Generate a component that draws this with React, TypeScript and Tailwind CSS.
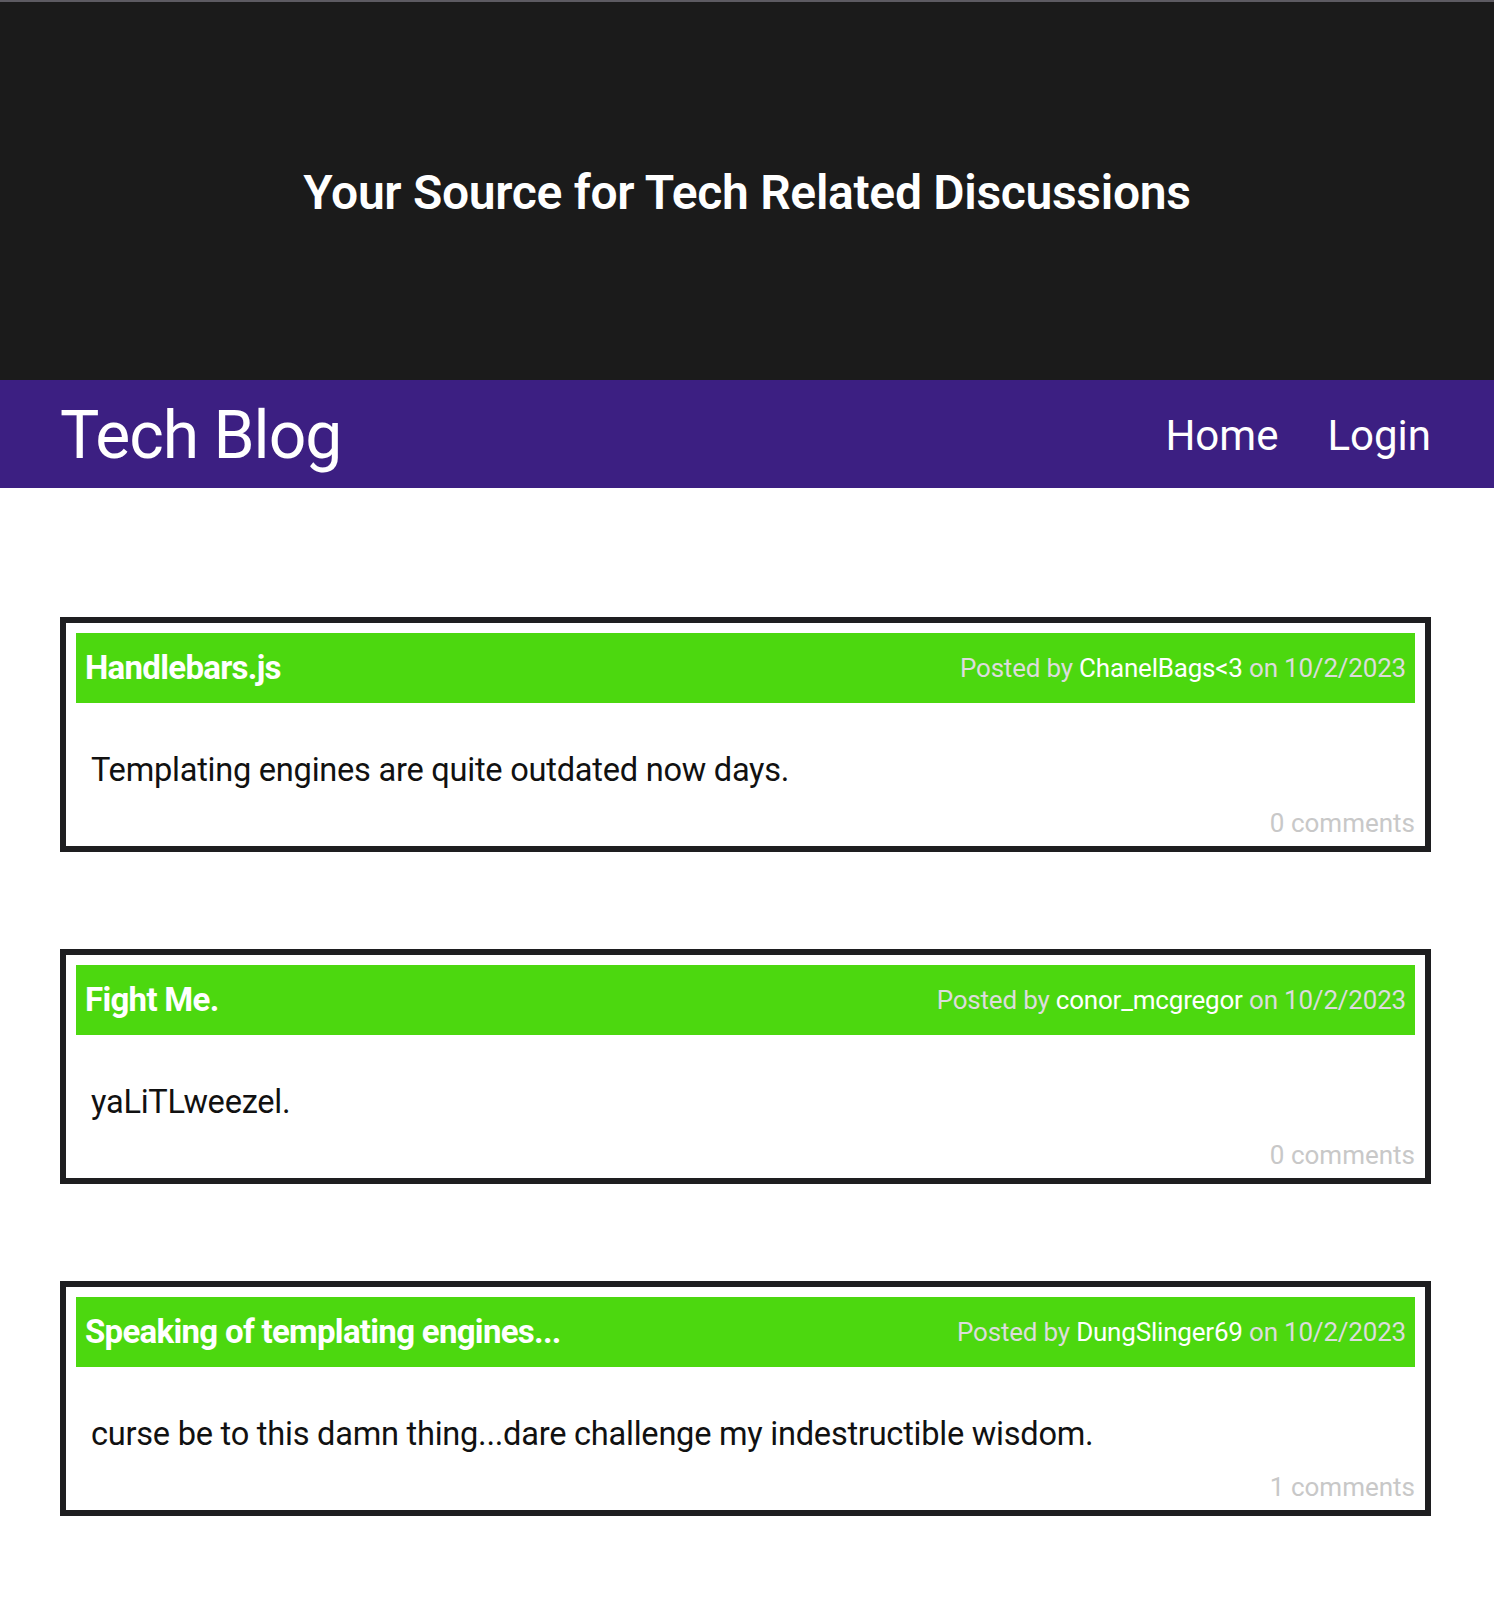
import React from "react";

const posts = [
  {
    title: "Handlebars.js",
    author: "ChanelBags<3",
    date: "10/2/2023",
    body: "Templating engines are quite outdated now days.",
    comments: 0,
  },
  {
    title: "Fight Me.",
    author: "conor_mcgregor",
    date: "10/2/2023",
    body: "yaLiTLweezel.",
    comments: 0,
  },
  {
    title: "Speaking of templating engines...",
    author: "DungSlinger69",
    date: "10/2/2023",
    body: "curse be to this damn thing...dare challenge my indestructible wisdom.",
    comments: 1,
  },
];

function App() {
  return (
    <div className="min-h-[1600px] bg-white font-['Roboto',sans-serif]">
      <header className="h-[380px] border-t-2 border-[#5d5b62] bg-[#1b1b1b] flex items-center justify-center">
        <h1 className="text-white text-[48px] font-semibold tracking-[-0.3px] mt-[3px]">
          Your Source for Tech Related Discussions
        </h1>
      </header>
      <nav className="h-[108px] bg-[#3c1f82] flex items-center justify-between pl-[60px] pr-[63px]">
        <a href="/" className="text-white text-[66px] tracking-[-1px] leading-none mt-[4px]">
          Tech Blog
        </a>
        <div className="flex gap-[49px] text-white text-[42px] leading-none mt-[4px]">
          <a href="/">Home</a>
          <a href="/login">Login</a>
        </div>
      </nav>
      <main className="pl-[60px] pr-[63px] pt-[129px] flex flex-col gap-[97px]">
        {posts.map((post) => (
          <article
            key={post.title}
            className="h-[235px] border-[6px] border-[#1e1e20] p-[10px] flex flex-col"
          >
            <div className="h-[70px] bg-[#4cd80f] flex items-center justify-between pl-[9px] pr-[9px]">
              <h2 className="text-white text-[33px] font-bold tracking-[-0.7px]">
                {post.title}
              </h2>
              <span className="text-[#dcdcdc] text-[26px] tracking-[-0.2px]">
                Posted by <span className="text-white">{post.author}</span> on{" "}
                {post.date}
              </span>
            </div>
            <p className="text-[#111] text-[32.6px] tracking-[-0.25px] pl-[15px] mt-[47px] leading-[40px]">
              {post.body}
            </p>
            <div className="mt-auto text-right text-[#c8c8c8] text-[26px] leading-none">
              {post.comments} comments
            </div>
          </article>
        ))}
      </main>
    </div>
  );
}

export default App;
